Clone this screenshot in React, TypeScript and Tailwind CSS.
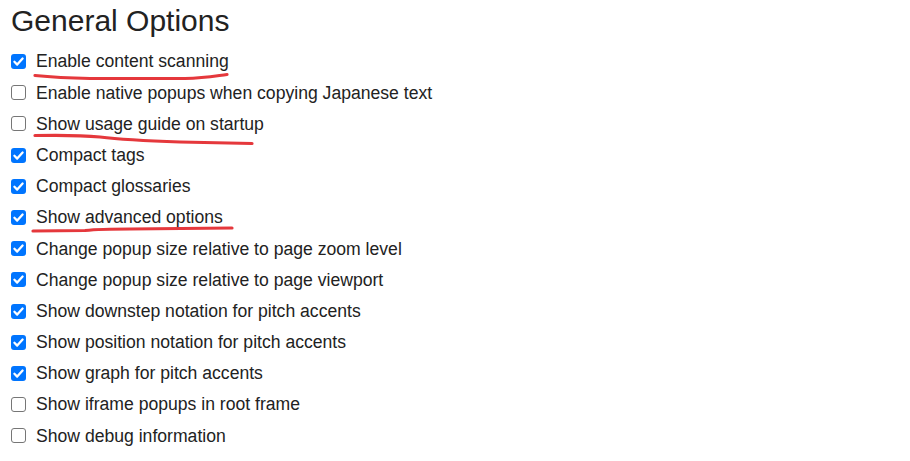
import React from 'react';

const options: { label: string; checked: boolean }[] = [
  { label: 'Enable content scanning', checked: true },
  { label: 'Enable native popups when copying Japanese text', checked: false },
  { label: 'Show usage guide on startup', checked: false },
  { label: 'Compact tags', checked: true },
  { label: 'Compact glossaries', checked: true },
  { label: 'Show advanced options', checked: true },
  { label: 'Change popup size relative to page zoom level', checked: true },
  { label: 'Change popup size relative to page viewport', checked: true },
  { label: 'Show downstep notation for pitch accents', checked: true },
  { label: 'Show position notation for pitch accents', checked: true },
  { label: 'Show graph for pitch accents', checked: true },
  { label: 'Show iframe popups in root frame', checked: false },
  { label: 'Show debug information', checked: false },
];

function Checkbox({ checked }: { checked: boolean }) {
  if (checked) {
    return (
      <span className="flex h-[15px] w-[15px] shrink-0 items-center justify-center rounded-[3px] bg-[#0075ff]">
        <svg viewBox="0 0 15 15" className="h-[15px] w-[15px]">
          <path d="M3.4 7.8 L6.2 10.6 L11.6 4.5" fill="none" stroke="#fff" strokeWidth="2.3" strokeLinecap="round" strokeLinejoin="round" />
        </svg>
      </span>
    );
  }
  return <span className="h-[15px] w-[15px] shrink-0 rounded-[3px] border border-[#767676] bg-white" />;
}

export default function App() {
  return (
    <div className="relative h-[461px] w-[910px] bg-white font-['Liberation_Sans',Arial,sans-serif] text-[#222]">
      <h1 className="pl-[11px] pt-[3px] text-[30px] leading-[36px] font-normal">General Options</h1>

      <div className="mt-[7px] flex flex-col">
        {options.map((opt) => (
          <label key={opt.label} className="flex h-[31.2px] items-center gap-[10px] pl-[11px] text-[17.6px]">
            <Checkbox checked={opt.checked} />
            <span>{opt.label}</span>
          </label>
        ))}
      </div>

      {/* hand-drawn red underlines */}
      <svg className="pointer-events-none absolute left-0 top-0" width="910" height="461" viewBox="0 0 910 461">
        <g fill="none" stroke="#e5383c" strokeWidth="3.2" strokeLinecap="round" strokeLinejoin="round">
          <path d="M35 75.5 C50 77 65 78 90 78.5 L185 78.5 C205 78 215 76 227 74.5" />
          <path d="M35 135.5 C60 135 85 135.5 100 137 C120 139.5 150 141 180 142 L252 143.5" />
          <path d="M33 231 L85 230.5 C95 229.5 110 229 130 229 L232 228" />
        </g>
      </svg>
    </div>
  );
}
